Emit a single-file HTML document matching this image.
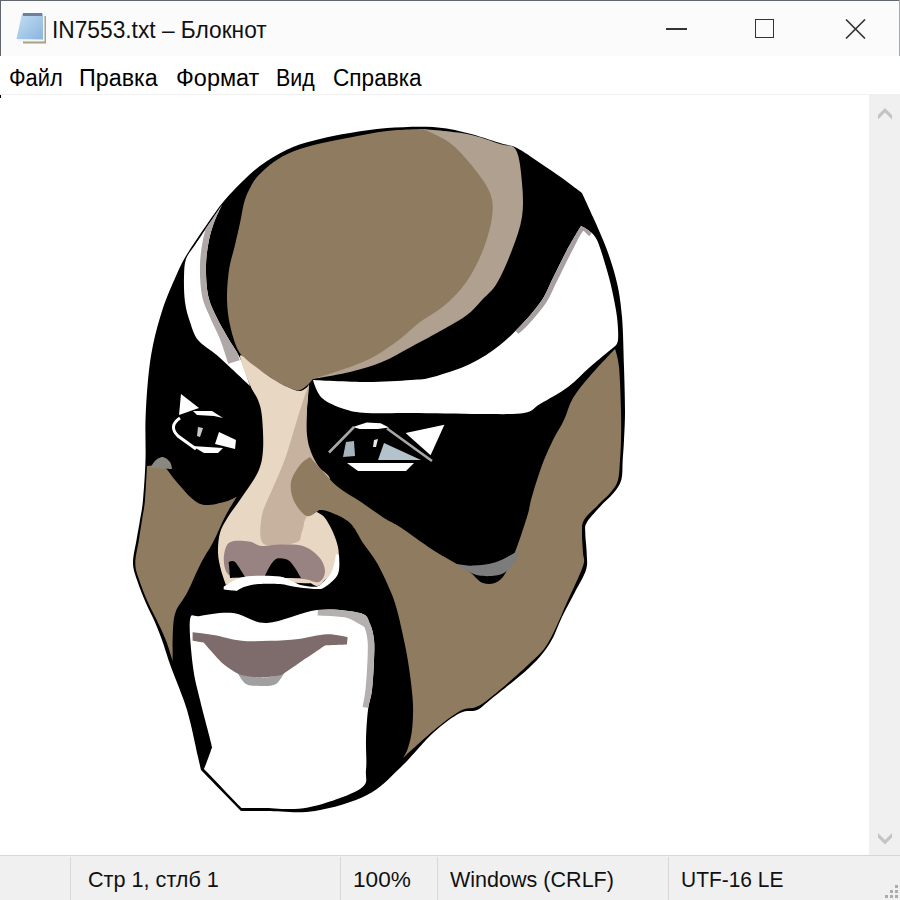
<!DOCTYPE html>
<html><head><meta charset="utf-8">
<style>
html,body{margin:0;padding:0;width:900px;height:900px;overflow:hidden;background:#fff;font-family:"Liberation Sans",sans-serif;}
.abs{position:absolute;}
#title{left:0;top:0;width:900px;height:56px;background:#fbfbfb;}
#menu{left:0;top:56px;width:900px;height:38px;background:#fff;}
#menuline{left:0;top:94px;width:900px;height:1px;background:#f0f0f0;}
#scroll{left:869px;top:95px;width:31px;height:760px;background:#f0f0f0;}
#status{left:0;top:855px;width:900px;height:45px;background:#f0f0f0;border-top:1px solid #d7d7d7;}
.t{position:absolute;white-space:nowrap;color:#000;}
.sep{position:absolute;top:857px;width:1px;height:43px;background:#d9d9d9;}
</style></head><body>
<div class="abs" id="title"></div>
<div class="abs" style="left:0;top:0;width:900px;height:1px;background:#60666c"></div>
<div class="abs" style="left:0;top:0;width:1px;height:56px;background:#60666c"></div>
<div class="abs" style="left:899px;top:0;width:1px;height:56px;background:#a6a8aa"></div>
<div class="abs" id="menu"></div>
<div class="abs" id="menuline"></div>
<div class="abs" style="left:0;top:95px;width:1px;height:3px;background:#000"></div>
<div class="abs" id="scroll"></div>
<div class="abs" id="status"></div>

<!-- notepad icon -->
<svg class="abs" style="left:10px;top:8px" width="45" height="42" viewBox="0 0 45 42">
  <defs><linearGradient id="ig" x1="0" y1="0" x2="1" y2="1"><stop offset="0" stop-color="#c4e0f4"/><stop offset="1" stop-color="#8ab4dc"/></linearGradient></defs>
  <path d="M13 8 L36 8 L36 35.5 L13 35.5 Z" fill="#a9a386"/>
  <path d="M12 6 L34.5 6 L34.5 33.5 L8 33.5 Z" fill="#f4f4f4"/>
  <path d="M12 5.5 L33 5.5 L33 31.5 L6.5 31 Z" fill="url(#ig)"/>
  <path d="M13 5 L32 5 L32 8 L13 8 Z" fill="#6f8098"/>
</svg>
<div class="t" style="left:52.3px;top:17.3px;font-size:23px;color:#111;transform:scaleX(0.988);transform-origin:0 0">IN7553.txt – Блокнот</div>

<!-- window controls -->
<div class="abs" style="left:666px;top:28px;width:21px;height:1.5px;background:#333"></div>
<div class="abs" style="left:755px;top:19px;width:17px;height:17px;border:1.5px solid #333"></div>
<svg class="abs" style="left:845px;top:19px" width="21" height="20" viewBox="0 0 21 20"><path d="M1 0.5 L20 19.5 M20 0.5 L1 19.5" stroke="#333" stroke-width="1.6"/></svg>

<!-- menu -->
<div class="t" style="left:9px;top:64.5px;font-size:23px;transform:scaleX(0.95);transform-origin:0 0">Файл</div>
<div class="t" style="left:78.5px;top:64.5px;font-size:23px;transform:scaleX(1.013);transform-origin:0 0">Правка</div>
<div class="t" style="left:176px;top:64.5px;font-size:23px;transform:scaleX(1.02);transform-origin:0 0">Формат</div>
<div class="t" style="left:275.5px;top:64.5px;font-size:23px;transform:scaleX(0.93);transform-origin:0 0">Вид</div>
<div class="t" style="left:332.8px;top:64.5px;font-size:23px;transform:scaleX(0.983);transform-origin:0 0">Справка</div>

<!-- scroll arrows -->
<svg class="abs" style="left:869px;top:95px" width="31" height="760" viewBox="0 0 31 760">
  <path d="M9 20 L16 13 L23 20 L23 24.5 L16 17.5 L9 24.5 Z" fill="#c4c4c4"/>
  <path d="M9 738 L16 745 L23 738 L23 742.5 L16 749.5 L9 742.5 Z" fill="#c4c4c4"/>
</svg>

<!-- status -->
<div class="sep" style="left:70px"></div>
<div class="sep" style="left:340px"></div>
<div class="sep" style="left:437px"></div>
<div class="sep" style="left:668px"></div>
<div class="t" style="left:87.75px;top:866.7px;font-size:22px;color:#111;transform:scaleX(0.983);transform-origin:0 0">Стр 1, стлб 1</div>
<div class="t" style="left:352.5px;top:866.7px;font-size:22px;color:#111;transform:scaleX(1.028);transform-origin:0 0">100%</div>
<div class="t" style="left:450px;top:866.7px;font-size:22px;color:#111;transform:scaleX(0.979);transform-origin:0 0">Windows (CRLF)</div>
<div class="t" style="left:681px;top:866.7px;font-size:22px;color:#111;transform:scaleX(0.952);transform-origin:0 0">UTF-16 LE</div>
<svg class="abs" style="left:884px;top:884px" width="16" height="16">
  <rect x="1" y="11" width="3" height="3" fill="#acacac"/><rect x="6" y="11" width="3" height="3" fill="#acacac"/><rect x="11" y="11" width="3" height="3" fill="#acacac"/>
  <rect x="6" y="6" width="3" height="3" fill="#acacac"/><rect x="11" y="6" width="3" height="3" fill="#acacac"/>
  <rect x="11" y="1" width="3" height="3" fill="#acacac"/>
</svg>

<!-- FACE -->
<svg class="abs" style="left:0;top:0" width="900" height="900" viewBox="0 0 900 900">
<path fill="#000" d="M350.0 133.0 C361.2 131.2 373.2 129.0 387.0 128.0 C400.8 127.0 419.7 126.2 433.0 127.0 C446.3 127.8 455.8 130.3 467.0 133.0 C478.2 135.7 491.7 140.5 500.0 143.0 C508.3 145.5 510.3 144.7 517.0 148.0 C523.7 151.3 532.5 158.0 540.0 163.0 C547.5 168.0 555.0 173.0 562.0 178.0 C569.0 183.0 582.0 193.0 582.0 193.0 C582.0 193.0 588.8 207.5 593.0 217.0 C597.2 226.5 603.0 239.0 607.0 250.0 C611.0 261.0 614.5 271.8 617.0 283.0 C619.5 294.2 620.8 303.0 622.0 317.0 C623.2 331.0 623.5 351.3 624.0 367.0 C624.5 382.7 625.0 398.8 625.0 411.0 C625.0 423.2 624.4 431.8 624.0 440.0 C623.6 448.2 623.2 453.3 622.7 460.0 C622.2 466.7 622.9 474.4 621.3 480.0 C619.7 485.6 616.8 488.9 613.3 493.3 C609.8 497.8 604.4 501.8 600.0 506.7 C595.6 511.6 589.2 518.3 586.7 522.7 C584.2 527.1 585.3 528.2 585.3 533.3 C585.3 538.4 586.6 547.2 586.7 553.3 C586.8 559.4 588.0 563.5 586.0 570.0 C584.0 576.5 579.0 584.2 575.0 592.0 C571.0 599.8 566.2 608.5 562.0 617.0 C557.8 625.5 555.3 634.7 550.0 643.0 C544.7 651.3 540.0 657.5 530.0 667.0 C520.0 676.5 498.8 692.8 490.0 700.0 C481.2 707.2 482.0 707.8 477.0 710.0 C472.0 712.2 467.3 709.2 460.0 713.0 C452.7 716.8 443.0 723.8 433.0 733.0 C423.0 742.2 411.0 757.7 400.0 768.0 C389.0 778.3 381.2 787.8 367.0 795.0 C352.8 802.2 331.7 808.3 315.0 811.0 C298.3 813.7 279.3 811.0 267.0 811.0 C254.7 811.0 241.0 811.0 241.0 811.0 C241.0 811.0 201.0 770.0 201.0 770.0 C201.0 770.0 200.3 767.0 198.0 757.0 C195.7 747.0 191.5 725.0 187.0 710.0 C182.5 695.0 175.2 678.7 171.0 667.0 C166.8 655.3 164.8 647.8 162.0 640.0 C159.2 632.2 156.8 626.3 154.0 620.0 C151.2 613.7 148.3 608.7 145.5 602.0 C142.7 595.3 139.1 586.5 137.0 580.0 C134.9 573.5 133.1 569.7 133.0 563.0 C132.9 556.3 135.3 547.2 136.5 540.0 C137.7 532.8 138.9 526.7 140.0 520.0 C141.1 513.3 142.1 510.0 143.0 500.0 C143.9 490.0 145.1 473.3 145.5 460.0 C145.9 446.7 145.1 433.3 145.5 420.0 C145.9 406.7 146.8 392.5 148.0 380.0 C149.2 367.5 150.5 357.0 153.0 345.0 C155.5 333.0 159.2 319.5 163.0 308.0 C166.8 296.5 172.1 284.8 176.0 276.0 C179.9 267.2 181.4 263.5 186.5 255.0 C191.6 246.5 200.2 234.0 206.5 225.0 C212.8 216.0 217.2 209.0 224.0 201.0 C230.8 193.0 239.8 183.7 247.0 177.0 C254.2 170.3 259.3 166.0 267.0 161.0 C274.7 156.0 284.2 150.7 293.0 147.0 C301.8 143.3 310.5 141.3 320.0 139.0 C329.5 136.7 338.8 134.8 350.0 133.0Z" />
<path fill="#afa090" d="M423.0 129.0 C423.0 129.0 454.2 131.5 467.0 134.0 C479.8 136.5 491.8 141.3 500.0 144.0 C508.2 146.7 512.3 143.5 516.0 150.0 C519.7 156.5 521.0 171.8 522.0 183.0 C523.0 194.2 523.7 205.8 522.0 217.0 C520.3 228.2 516.2 239.0 512.0 250.0 C507.8 261.0 502.0 274.7 497.0 283.0 C492.0 291.3 487.0 294.7 482.0 300.0 C477.0 305.3 473.3 310.2 467.0 315.0 C460.7 319.8 453.3 323.7 444.0 329.0 C434.7 334.3 421.3 341.5 411.0 347.0 C400.7 352.5 392.2 357.8 382.0 362.0 C371.8 366.2 361.5 369.2 350.0 372.0 C338.5 374.8 313.0 379.0 313.0 379.0 C313.0 379.0 377.2 329.8 400.0 300.0 C422.8 270.2 446.2 228.5 450.0 200.0 C453.8 171.5 423.0 129.0 423.0 129.0Z" />
<path fill="#8f7b5f" d="M257.0 177.0 C261.0 172.4 267.0 166.8 273.0 162.5 C279.0 158.2 285.2 154.7 293.0 151.5 C300.8 148.3 310.5 145.8 320.0 143.5 C329.5 141.2 338.8 139.6 350.0 137.5 C361.2 135.4 374.8 132.4 387.0 131.0 C399.2 129.6 423.0 129.0 423.0 129.0 C423.0 129.0 441.7 136.7 450.0 143.0 C458.3 149.3 466.3 158.7 473.0 167.0 C479.7 175.3 486.8 184.7 490.0 193.0 C493.2 201.3 493.2 207.5 492.0 217.0 C490.8 226.5 487.2 239.3 483.0 250.0 C478.8 260.7 473.3 271.8 467.0 281.0 C460.7 290.2 452.8 298.2 445.0 305.0 C437.2 311.8 427.5 316.3 420.0 322.0 C412.5 327.7 407.5 333.3 400.0 339.0 C392.5 344.7 383.3 351.3 375.0 356.0 C366.7 360.7 360.3 363.2 350.0 367.0 C339.7 370.8 313.0 379.0 313.0 379.0 C313.0 379.0 305.0 389.0 300.0 390.0 C295.0 391.0 288.5 387.5 283.0 385.0 C277.5 382.5 272.5 378.7 267.0 375.0 C261.5 371.3 254.8 367.2 250.0 363.0 C245.2 358.8 241.3 356.3 238.0 350.0 C234.7 343.7 231.8 333.3 230.0 325.0 C228.2 316.7 227.2 309.2 227.0 300.0 C226.8 290.8 227.7 279.2 229.0 270.0 C230.3 260.8 233.2 252.8 235.0 245.0 C236.8 237.2 238.5 230.0 240.0 223.0 C241.5 216.0 242.5 208.5 244.0 203.0 C245.5 197.5 246.8 194.3 249.0 190.0 C251.2 185.7 253.0 181.6 257.0 177.0Z" />
<path fill="#fff" d="M222.0 205.0 C222.0 205.0 209.5 223.3 205.0 230.0 C200.5 236.7 198.2 240.2 195.0 245.0 C191.8 249.8 187.8 253.7 186.0 259.0 C184.2 264.3 184.2 269.8 184.0 277.0 C183.8 284.2 184.0 294.5 185.0 302.0 C186.0 309.5 187.8 315.7 190.0 322.0 C192.2 328.3 193.6 334.5 198.0 340.0 C202.4 345.5 210.9 350.0 216.7 355.0 C222.5 360.0 227.4 364.8 233.0 370.0 C238.6 375.2 250.0 386.0 250.0 386.0 C250.0 386.0 243.7 366.0 240.0 358.0 C236.3 350.0 232.0 345.0 228.0 338.0 C224.0 331.0 219.3 323.2 216.0 316.0 C212.7 308.8 209.7 303.5 208.0 295.0 C206.3 286.5 205.8 274.2 206.0 265.0 C206.2 255.8 207.5 247.5 209.0 240.0 C210.5 232.5 212.8 225.8 215.0 220.0 C217.2 214.2 222.0 205.0 222.0 205.0Z" />
<path fill="#8f7b5f" d="M147.0 466.0 C147.0 466.0 158.6 464.4 163.3 466.7 C168.0 469.0 170.3 474.7 175.0 480.0 C179.7 485.3 186.7 494.1 191.7 498.3 C196.7 502.5 199.4 504.4 205.0 505.0 C210.6 505.6 219.7 503.1 225.0 501.7 C230.3 500.3 236.7 496.7 236.7 496.7 C236.7 496.7 228.9 509.2 225.0 516.7 C221.1 524.2 217.3 534.0 213.3 541.7 C209.3 549.4 205.4 554.5 201.0 563.0 C196.6 571.5 191.2 585.0 187.0 593.0 C182.8 601.0 178.3 605.0 176.0 611.0 C173.7 617.0 173.6 620.7 173.0 629.0 C172.4 637.3 172.7 661.0 172.7 661.0 C172.7 661.0 168.3 646.4 165.6 639.6 C162.9 632.8 159.7 626.3 156.7 620.0 C153.7 613.7 150.8 608.8 147.8 602.0 C144.8 595.2 141.0 585.5 138.9 579.0 C136.8 572.5 135.3 569.5 135.3 563.0 C135.3 556.5 137.8 547.2 138.9 540.0 C140.0 532.8 141.0 526.7 142.0 520.0 C143.0 513.3 144.2 509.0 145.0 500.0 C145.8 491.0 147.0 466.0 147.0 466.0Z" />
<path fill="#fff" d="M313.0 380.0 C313.0 380.0 350.7 382.0 367.0 382.0 C383.3 382.0 400.0 380.8 411.0 380.0 C422.0 379.2 423.2 379.7 433.0 377.0 C442.8 374.3 458.8 369.3 470.0 364.0 C481.2 358.7 491.0 352.0 500.0 345.0 C509.0 338.0 517.0 329.5 524.0 322.0 C531.0 314.5 537.3 307.0 542.0 300.0 C546.7 293.0 547.8 288.3 552.0 280.0 C556.2 271.7 562.2 259.0 567.0 250.0 C571.8 241.0 581.0 226.0 581.0 226.0 C581.0 226.0 585.3 227.7 588.0 230.0 C590.7 232.3 594.0 233.8 597.0 240.0 C600.0 246.2 603.5 258.7 606.0 267.0 C608.5 275.3 610.2 281.7 612.0 290.0 C613.8 298.3 616.0 308.7 617.0 317.0 C618.0 325.3 618.5 335.0 618.0 340.0 C617.5 345.0 614.0 347.0 614.0 347.0 C614.0 347.0 597.7 360.3 590.0 367.0 C582.3 373.7 576.3 380.8 568.0 387.0 C559.7 393.2 547.3 399.7 540.0 404.0 C532.7 408.3 534.0 411.3 524.0 413.0 C514.0 414.7 498.8 414.0 480.0 414.0 C461.2 414.0 429.8 413.2 411.0 413.0 C392.2 412.8 378.2 413.7 367.0 413.0 C355.8 412.3 351.5 411.5 344.0 409.0 C336.5 406.5 327.2 402.8 322.0 398.0 C316.8 393.2 313.0 380.0 313.0 380.0Z" />
<path fill="#e8d7c3" d="M240.0 356.0 C239.7 359.5 247.0 377.7 250.0 385.0 C253.0 392.3 256.0 394.7 258.0 400.0 C260.0 405.3 261.2 408.7 262.0 417.0 C262.8 425.3 263.7 440.8 263.0 450.0 C262.3 459.2 261.5 464.2 258.0 472.0 C254.5 479.8 247.0 489.5 242.0 497.0 C237.0 504.5 231.7 511.0 228.0 517.0 C224.3 523.0 221.7 527.0 220.0 533.0 C218.3 539.0 217.8 546.8 218.0 553.0 C218.2 559.2 219.7 564.7 221.0 570.0 C222.3 575.3 226.0 585.0 226.0 585.0 C226.0 585.0 247.7 578.3 260.0 578.0 C272.3 577.7 289.2 582.7 300.0 583.0 C310.8 583.3 318.7 583.8 325.0 580.0 C331.3 576.2 336.2 566.7 338.0 560.0 C339.8 553.3 338.2 547.0 336.0 540.0 C333.8 533.0 329.3 523.8 325.0 518.0 C320.7 512.2 314.2 513.0 310.0 505.0 C305.8 497.0 300.7 484.2 300.0 470.0 C299.3 455.8 304.5 434.2 306.0 420.0 C307.5 405.8 309.0 385.0 309.0 385.0 C309.0 385.0 304.3 391.0 300.0 391.0 C295.7 391.0 288.5 387.7 283.0 385.0 C277.5 382.3 272.2 378.5 267.0 375.0 C261.8 371.5 256.5 367.2 252.0 364.0 C247.5 360.8 240.3 352.5 240.0 356.0Z" />
<path fill="#c6b29e" d="M309.0 384.0 C309.0 384.0 307.3 401.5 307.0 410.0 C306.7 418.5 306.3 428.0 307.0 435.0 C307.7 442.0 309.0 446.7 311.0 452.0 C313.0 457.3 315.8 462.3 319.0 467.0 C322.2 471.7 330.5 474.5 330.0 480.0 C329.5 485.5 320.2 493.3 316.0 500.0 C311.8 506.7 307.7 513.3 305.0 520.0 C302.3 526.7 304.2 535.8 300.0 540.0 C295.8 544.2 286.3 544.7 280.0 545.0 C273.7 545.3 265.0 547.0 262.0 542.0 C259.0 537.0 260.3 523.7 262.0 515.0 C263.7 506.3 268.2 499.3 272.0 490.0 C275.8 480.7 280.8 470.7 285.0 459.0 C289.2 447.3 293.5 431.2 297.0 420.0 C300.5 408.8 304.0 398.0 306.0 392.0 C308.0 386.0 309.0 384.0 309.0 384.0Z" />
<path fill="#e8d7c3" d="M318.0 520.0 C321.0 520.3 321.0 523.2 323.0 527.0 C325.0 530.8 328.6 538.0 330.0 543.0 C331.4 548.0 332.2 551.3 331.5 557.0 C330.8 562.7 328.4 572.2 326.0 577.0 C323.6 581.8 320.5 586.3 317.0 586.0 C313.5 585.7 307.8 581.8 305.0 575.0 C302.2 568.2 300.0 553.3 300.0 545.0 C300.0 536.7 302.0 529.2 305.0 525.0 C308.0 520.8 315.0 519.7 318.0 520.0Z" />
<path fill="#8f7b5f" d="M615.0 349.0 C615.0 349.0 618.0 356.7 619.0 367.0 C620.0 377.3 620.7 398.8 621.0 411.0 C621.3 423.2 621.2 431.8 621.0 440.0 C620.8 448.2 620.5 453.3 620.0 460.0 C619.5 466.7 619.5 474.7 618.0 480.0 C616.5 485.3 614.3 487.8 611.0 492.0 C607.7 496.2 602.5 500.3 598.0 505.0 C593.5 509.7 586.7 515.3 584.0 520.0 C581.3 524.7 582.2 527.5 582.0 533.0 C581.8 538.5 582.8 547.5 583.0 553.0 C583.2 558.5 585.5 558.2 583.0 566.0 C580.5 573.8 573.8 587.2 568.0 600.0 C562.2 612.8 554.7 632.2 548.0 643.0 C541.3 653.8 537.7 655.8 528.0 665.0 C518.3 674.2 498.7 691.0 490.0 698.0 C481.3 705.0 481.0 704.8 476.0 707.0 C471.0 709.2 467.2 707.0 460.0 711.0 C452.8 715.0 442.5 723.2 433.0 731.0 C423.5 738.8 403.0 758.0 403.0 758.0 C403.0 758.0 406.5 752.7 408.0 748.0 C409.5 743.3 411.2 737.2 412.0 730.0 C412.8 722.8 413.3 714.2 413.0 705.0 C412.7 695.8 411.3 685.0 410.0 675.0 C408.7 665.0 407.2 655.8 405.0 645.0 C402.8 634.2 399.5 619.2 397.0 610.0 C394.5 600.8 393.3 597.8 390.0 590.0 C386.7 582.2 381.5 570.8 377.0 563.0 C372.5 555.2 367.5 549.7 363.0 543.0 C358.5 536.3 355.5 528.2 350.0 523.0 C344.5 517.8 335.2 514.2 330.0 512.0 C324.8 509.8 319.0 510.0 319.0 510.0 C319.0 510.0 310.9 517.5 306.7 516.0 C302.5 514.5 296.6 506.7 294.0 501.0 C291.4 495.3 290.0 488.0 291.0 482.0 C292.0 476.0 296.8 469.2 300.0 465.0 C303.2 460.8 310.0 457.0 310.0 457.0 C310.0 457.0 314.3 462.0 319.0 467.0 C323.7 472.0 331.0 481.2 338.0 487.0 C345.0 492.8 353.3 496.8 361.0 502.0 C368.7 507.2 377.5 513.8 384.0 518.0 C390.5 522.2 391.8 521.7 400.0 527.0 C408.2 532.3 421.8 542.8 433.0 550.0 C444.2 557.2 458.7 564.5 467.0 570.0 C475.3 575.5 477.5 581.3 483.0 583.0 C488.5 584.7 495.0 584.3 500.0 580.0 C505.0 575.7 508.5 567.5 513.0 557.0 C517.5 546.5 524.0 526.5 527.0 517.0 C530.0 507.5 529.3 506.2 531.0 500.0 C532.7 493.8 534.8 486.7 537.0 480.0 C539.2 473.3 541.3 466.7 544.0 460.0 C546.7 453.3 549.7 446.7 553.0 440.0 C556.3 433.3 560.7 427.0 564.0 420.0 C567.3 413.0 568.7 405.3 573.0 398.0 C577.3 390.7 583.0 384.2 590.0 376.0 C597.0 367.8 615.0 349.0 615.0 349.0Z" />
<path fill="#988282" d="M228.7 543.0 C232.9 539.4 243.6 541.0 249.0 541.5 C254.4 542.0 255.8 545.5 261.0 546.0 C266.2 546.5 273.0 544.6 280.0 544.6 C287.0 544.6 296.5 543.9 303.0 546.0 C309.5 548.1 315.3 552.8 319.0 557.0 C322.7 561.2 325.0 566.8 325.0 571.0 C325.0 575.2 322.7 580.7 319.0 582.0 C315.3 583.3 311.5 579.8 303.0 579.0 C294.5 578.2 279.7 577.3 268.0 577.0 C256.3 576.7 240.3 579.3 233.0 577.0 C225.7 574.7 224.7 568.7 224.0 563.0 C223.3 557.3 224.5 546.6 228.7 543.0Z" />
<path fill="#000" d="M228.7 562.0 C228.7 562.0 232.3 559.5 235.0 562.0 C237.7 564.5 245.0 577.0 245.0 577.0 C245.0 577.0 230.0 578.0 230.0 578.0 C230.0 578.0 228.7 562.0 228.7 562.0Z" />
<path fill="#000" d="M264.0 578.0 C264.0 578.0 267.8 569.2 270.0 566.0 C272.2 562.8 274.0 559.6 277.0 558.6 C280.0 557.6 285.0 558.4 288.0 560.0 C291.0 561.6 292.8 565.0 295.0 568.0 C297.2 571.0 301.0 578.0 301.0 578.0 C301.0 578.0 264.0 578.0 264.0 578.0Z" />
<path fill="#fff" d="M223.7 586.7 C223.7 586.7 233.8 579.8 239.6 578.0 C245.4 576.2 251.7 576.0 258.4 575.8 C265.1 575.6 274.5 575.8 280.0 576.6 C285.5 577.5 288.0 579.5 291.6 580.9 C295.2 582.3 297.6 584.2 301.7 585.2 C305.8 586.2 312.4 587.2 316.0 586.7 C319.6 586.2 320.3 584.9 323.0 582.3 C325.7 579.7 329.8 575.7 332.0 571.0 C334.2 566.3 336.0 554.0 336.0 554.0 C336.0 554.0 339.0 555.0 339.0 555.0 C339.0 555.0 340.3 568.7 338.0 574.0 C335.7 579.3 328.7 584.5 325.0 587.0 C321.3 589.5 320.8 589.0 316.0 589.0 C311.2 589.0 302.0 587.8 296.0 587.0 C290.0 586.2 286.3 584.5 280.0 584.0 C273.7 583.5 264.4 583.5 258.4 584.0 C252.4 584.5 247.6 585.8 244.0 587.0 C240.4 588.2 236.7 591.0 236.7 591.0 C236.7 591.0 223.7 589.6 223.7 589.6 C223.7 589.6 223.7 586.7 223.7 586.7Z" />
<path fill="#fff" d="M190.0 620.0 C191.2 611.5 192.8 617.2 200.0 616.0 C207.2 614.8 221.8 611.8 233.0 613.0 C244.2 614.2 253.0 623.5 267.0 623.0 C281.0 622.5 301.5 611.7 317.0 610.0 C332.5 608.3 351.2 610.7 360.0 613.0 C368.8 615.3 367.7 619.5 370.0 624.0 C372.3 628.5 373.3 634.0 374.0 640.0 C374.7 646.0 374.3 651.7 374.0 660.0 C373.7 668.3 373.0 681.7 372.0 690.0 C371.0 698.3 369.0 701.7 368.0 710.0 C367.0 718.3 366.3 730.0 366.0 740.0 C365.7 750.0 367.0 761.8 366.0 770.0 C365.0 778.2 369.7 782.8 360.0 789.0 C350.3 795.2 324.3 804.3 308.0 807.5 C291.7 810.7 273.1 807.9 262.0 808.0 C250.9 808.1 241.5 808.0 241.5 808.0 C241.5 808.0 204.0 769.0 204.0 769.0 C204.0 769.0 209.8 754.3 211.0 750.0 C212.2 745.7 212.8 751.3 211.0 743.0 C209.2 734.7 203.0 712.7 200.0 700.0 C197.0 687.3 194.7 680.3 193.0 667.0 C191.3 653.7 188.8 628.5 190.0 620.0Z" />
<path fill="#a0a0a0" d="M238.0 673.0 C238.0 673.0 254.3 678.0 262.0 678.0 C269.7 678.0 284.0 673.0 284.0 673.0 C284.0 673.0 279.7 681.8 276.0 684.0 C272.3 686.2 267.0 686.0 262.0 686.0 C257.0 686.0 250.0 686.2 246.0 684.0 C242.0 681.8 238.0 673.0 238.0 673.0Z" />
<path fill="#7e6c6c" d="M192.6 632.3 C192.6 632.3 205.2 633.6 213.4 635.0 C221.6 636.4 232.3 639.8 241.7 640.8 C251.1 641.8 260.6 641.1 270.0 640.8 C279.4 640.5 288.9 640.0 298.4 638.9 C307.9 637.8 318.6 634.5 326.8 634.2 C335.0 633.9 347.6 637.0 347.6 637.0 C347.6 637.0 347.0 644.6 347.0 644.6 C347.0 644.6 325.0 645.5 325.0 645.5 C325.0 645.5 305.6 658.6 298.4 663.5 C291.2 668.4 282.0 674.8 282.0 674.8 C282.0 674.8 267.6 677.7 260.6 677.7 C253.6 677.7 240.0 674.8 240.0 674.8 C240.0 674.8 228.8 668.9 222.8 663.5 C216.8 658.1 203.9 642.7 203.9 642.7 C203.9 642.7 192.6 640.8 192.6 640.8 C192.6 640.8 192.6 632.3 192.6 632.3Z" />
<defs><clipPath id="cl1"><path d="M222.0 205.0 C222.0 205.0 209.5 223.3 205.0 230.0 C200.5 236.7 198.2 240.2 195.0 245.0 C191.8 249.8 187.8 253.7 186.0 259.0 C184.2 264.3 184.2 269.8 184.0 277.0 C183.8 284.2 184.0 294.5 185.0 302.0 C186.0 309.5 187.8 315.7 190.0 322.0 C192.2 328.3 193.6 334.5 198.0 340.0 C202.4 345.5 210.9 350.0 216.7 355.0 C222.5 360.0 227.4 364.8 233.0 370.0 C238.6 375.2 250.0 386.0 250.0 386.0 C250.0 386.0 243.7 366.0 240.0 358.0 C236.3 350.0 232.0 345.0 228.0 338.0 C224.0 331.0 219.3 323.2 216.0 316.0 C212.7 308.8 209.7 303.5 208.0 295.0 C206.3 286.5 205.8 274.2 206.0 265.0 C206.2 255.8 207.5 247.5 209.0 240.0 C210.5 232.5 212.8 225.8 215.0 220.0 C217.2 214.2 222.0 205.0 222.0 205.0Z"/></clipPath><clipPath id="cl2"><path d="M313.0 380.0 C313.0 380.0 350.7 382.0 367.0 382.0 C383.3 382.0 400.0 380.8 411.0 380.0 C422.0 379.2 423.2 379.7 433.0 377.0 C442.8 374.3 458.8 369.3 470.0 364.0 C481.2 358.7 491.0 352.0 500.0 345.0 C509.0 338.0 517.0 329.5 524.0 322.0 C531.0 314.5 537.3 307.0 542.0 300.0 C546.7 293.0 547.8 288.3 552.0 280.0 C556.2 271.7 562.2 259.0 567.0 250.0 C571.8 241.0 581.0 226.0 581.0 226.0 C581.0 226.0 585.3 227.7 588.0 230.0 C590.7 232.3 594.0 233.8 597.0 240.0 C600.0 246.2 603.5 258.7 606.0 267.0 C608.5 275.3 610.2 281.7 612.0 290.0 C613.8 298.3 616.0 308.7 617.0 317.0 C618.0 325.3 618.5 335.0 618.0 340.0 C617.5 345.0 614.0 347.0 614.0 347.0 C614.0 347.0 597.7 360.3 590.0 367.0 C582.3 373.7 576.3 380.8 568.0 387.0 C559.7 393.2 547.3 399.7 540.0 404.0 C532.7 408.3 534.0 411.3 524.0 413.0 C514.0 414.7 498.8 414.0 480.0 414.0 C461.2 414.0 429.8 413.2 411.0 413.0 C392.2 412.8 378.2 413.7 367.0 413.0 C355.8 412.3 351.5 411.5 344.0 409.0 C336.5 406.5 327.2 402.8 322.0 398.0 C316.8 393.2 313.0 380.0 313.0 380.0Z"/></clipPath><clipPath id="cl3"><path d="M190.0 620.0 C191.2 611.5 192.8 617.2 200.0 616.0 C207.2 614.8 221.8 611.8 233.0 613.0 C244.2 614.2 253.0 623.5 267.0 623.0 C281.0 622.5 301.5 611.7 317.0 610.0 C332.5 608.3 351.2 610.7 360.0 613.0 C368.8 615.3 367.7 619.5 370.0 624.0 C372.3 628.5 373.3 634.0 374.0 640.0 C374.7 646.0 374.3 651.7 374.0 660.0 C373.7 668.3 373.0 681.7 372.0 690.0 C371.0 698.3 369.0 701.7 368.0 710.0 C367.0 718.3 366.3 730.0 366.0 740.0 C365.7 750.0 367.0 761.8 366.0 770.0 C365.0 778.2 369.7 782.8 360.0 789.0 C350.3 795.2 324.3 804.3 308.0 807.5 C291.7 810.7 273.1 807.9 262.0 808.0 C250.9 808.1 241.5 808.0 241.5 808.0 C241.5 808.0 204.0 769.0 204.0 769.0 C204.0 769.0 209.8 754.3 211.0 750.0 C212.2 745.7 212.8 751.3 211.0 743.0 C209.2 734.7 203.0 712.7 200.0 700.0 C197.0 687.3 194.7 680.3 193.0 667.0 C191.3 653.7 188.8 628.5 190.0 620.0Z"/></clipPath></defs>
<path clip-path="url(#cl1)" d="M234.0 362.0 C232.7 358.0 229.0 345.7 226.0 338.0 C223.0 330.3 219.0 323.2 216.0 316.0 C213.0 308.8 209.7 303.5 208.0 295.0 C206.3 286.5 205.8 274.2 206.0 265.0 C206.2 255.8 207.5 247.5 209.0 240.0 C210.5 232.5 212.8 225.8 215.0 220.0 C217.2 214.2 220.8 207.5 222.0 205.0" fill="none" stroke="#b0a8a6" stroke-width="12"/>
<path clip-path="url(#cl2)" d="M515.0 330.0 C516.5 328.7 519.5 327.0 524.0 322.0 C528.5 317.0 537.3 307.0 542.0 300.0 C546.7 293.0 547.8 288.3 552.0 280.0 C556.2 271.7 562.2 259.0 567.0 250.0 C571.8 241.0 576.8 229.0 581.0 226.0 C585.2 223.0 590.2 231.0 592.0 232.0" fill="none" stroke="#a8a0a0" stroke-width="10"/>
<path clip-path="url(#cl3)" d="M318.0 609.0 C322.7 609.3 338.7 609.5 346.0 611.0 C353.3 612.5 358.0 615.8 362.0 618.0 C366.0 620.2 368.0 620.3 370.0 624.0 C372.0 627.7 373.3 634.0 374.0 640.0 C374.7 646.0 374.3 651.7 374.0 660.0 C373.7 668.3 372.8 682.0 372.0 690.0 C371.2 698.0 369.5 705.0 369.0 708.0" fill="none" stroke="#b4b0b0" stroke-width="13"/>
<path fill="#8a8680" d="M150.0 468.0 C150.0 468.0 153.8 461.8 156.0 460.0 C158.2 458.2 160.7 456.7 163.0 457.0 C165.3 457.3 168.5 460.0 170.0 462.0 C171.5 464.0 172.0 469.0 172.0 469.0 C172.0 469.0 150.0 468.0 150.0 468.0Z" />
<path fill="#fff" d="M181.0 394.0 L179.0 415.0 L199.0 408.0 Z"/>
<path fill="#fff" d="M193.0 411.0 L212.0 411.0 L223.0 418.0 L214.0 416.0 L197.0 415.0 Z"/>
<path d="M180 418 Q168 426 178 436 L196 449" fill="none" stroke="#fff" stroke-width="3"/>
<path fill="#fff" d="M192.0 446.0 L223.0 448.0 L218.0 453.0 L204.0 453.0 Z"/>
<path fill="#fff" d="M219.0 432.0 L236.0 440.0 L235.0 449.0 L215.0 444.0 Z"/>
<path fill="#c8c8c8" d="M198.0 427.0 L203.0 428.0 L200.0 437.0 L197.0 436.0 Z"/>
<path d="M329 452.5 L354 427 M387 428.5 L432 461" fill="none" stroke="#a8a8a8" stroke-width="2.6"/>
<path fill="#fff" d="M353.0 427.0 L366.7 422.6 L380.6 423.3 L389.0 427.5 L377.8 429.0 L359.7 429.0 Z"/>
<path fill="#e8e8e8" d="M374.0 440.0 L378.0 439.0 L376.0 447.0 L373.0 447.0 Z"/>
<path fill="#fff" d="M405.6 433.0 L444.4 424.7 L430.6 455.3 Z"/>
<path fill="#b4c2cc" d="M384.0 443.0 L421.0 460.0 L378.0 460.0 Z"/>
<path fill="#a6b4be" d="M346.0 442.0 L354.0 441.0 L355.0 456.0 L343.0 457.0 Z"/>
<path fill="#fff" d="M347.0 463.0 L414.0 463.0 L406.0 471.0 L358.0 471.0 Z"/>
<path fill="#7c7c7c" d="M456.7 564.4 C457.6 563.5 466.5 566.0 473.0 565.6 C479.5 565.2 488.1 564.6 495.6 562.2 C503.1 559.8 517.8 551.0 517.8 551.0 C517.8 551.0 519.6 553.4 517.8 556.7 C515.9 560.0 510.4 567.9 506.7 571.0 C503.0 574.1 500.2 574.8 495.6 575.6 C491.0 576.4 483.6 576.4 479.0 575.6 C474.4 574.8 471.5 572.9 467.8 571.0 C464.1 569.1 455.8 565.3 456.7 564.4Z" />
</svg>
</body></html>
